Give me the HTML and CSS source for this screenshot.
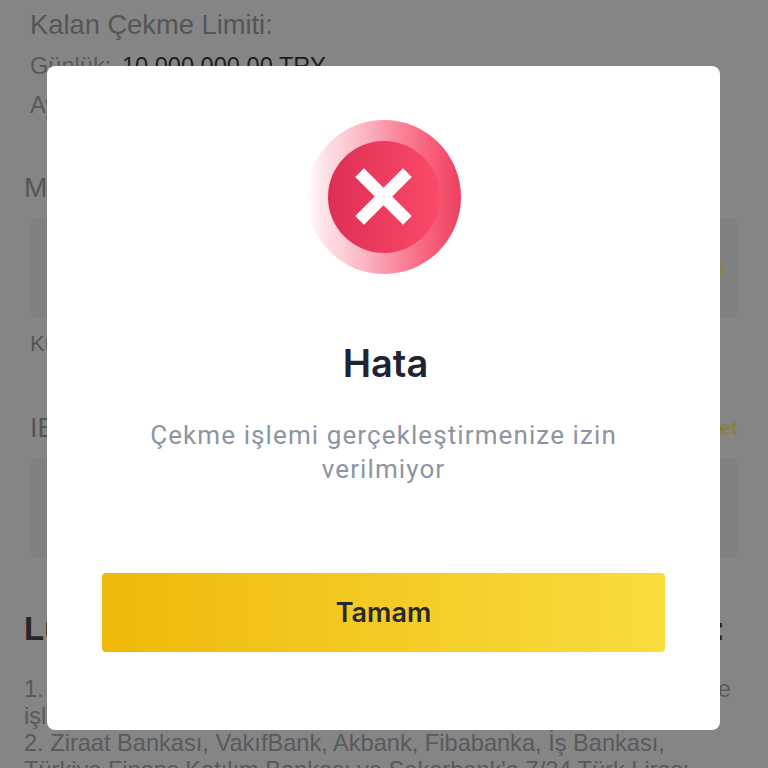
FILE: index.html
```html
<!DOCTYPE html>
<html lang="tr">
<head>
<meta charset="utf-8">
<title>Hata</title>
<link rel="stylesheet" href="styles.css">
</head>
<body>
<main class="page">
  <h2 class="limit-title">Kalan Çekme Limiti:</h2>
  <p class="limit-row"><span class="muted">Günlük:</span> <span class="value">10.000.000,00 TRY</span></p>
  <p class="limit-row second"><span class="muted">Aylık:</span></p>
  <h3 class="label amount">Miktar</h3>
  <div class="field"><span class="link">TRY'S</span></div>
  <p class="note">Kullanılabilir</p>
  <div class="label-row"><span class="iban">IBAN</span><span class="link iban-link">Yönet</span></div>
  <div class="field"></div>
  <h2 class="notice"><span>Lütfen aşağıdaki</span><span>dikkat ediniz:</span></h2>
  <p class="list"><span class="list-line first"><span>1. Çekme işlemi</span><span>yalnızca kendi hesabınıza yapılabilir ve</span></span>
  <span class="list-line">işlem iade edilir</span>
  <span class="list-line">2. Ziraat Bankası, VakıfBank, Akbank, Fibabanka, İş Bankası,</span>
  <span class="list-line">Türkiye Finans Katılım Bankası ve Şekerbank'a 7/24 Türk Lirası</span></p>
</main>

<div class="modal" role="dialog">
  <svg class="status-icon" width="154" height="154" viewBox="0 0 154 154" aria-hidden="true">
    <defs>
      <linearGradient id="ring" x1="0" y1="0" x2="1" y2="0">
        <stop offset="0" stop-color="#ff8599" stop-opacity="0"/>
        <stop offset="0.2" stop-color="#fba9b6" stop-opacity="0.5"/>
        <stop offset="0.5" stop-color="#fa9aab"/>
        <stop offset="0.78" stop-color="#f8637d"/>
        <stop offset="1" stop-color="#ee3f5e"/>
      </linearGradient>
      <linearGradient id="core" x1="0" y1="0" x2="1" y2="0">
        <stop offset="0" stop-color="#dd2e55"/>
        <stop offset="1" stop-color="#fb4a68"/>
      </linearGradient>
    </defs>
    <circle cx="77" cy="77" r="77" fill="url(#ring)"/>
    <circle cx="77" cy="77" r="56" fill="url(#core)"/>
    <path d="M52.6 52.6 L100.4 100.4 M100.4 52.6 L52.6 100.4" stroke="#fff" stroke-width="12.5" fill="none"/>
  </svg>
  <h1 class="modal-title">Hata</h1>
  <p class="modal-text">Çekme işlemi gerçekleştirmenize izin verilmiyor</p>
  <button class="modal-button" type="button">Tamam</button>
</div>
</body>
</html>
```
FILE: styles.css
```css
html, body {
  margin: 0;
  height: 768px;
  overflow: hidden;
  background: #858585;
}

.page {
  height: 768px;
  box-sizing: border-box;
  padding: 10px 30px 0 24px;
  overflow: hidden;
  font-family: "Liberation Sans", Arial, sans-serif;
  color: #555558;
}

.limit-title {
  margin: 0 0 0 6px;
  font-size: 27.3px;
  line-height: 30px;
  font-weight: 400;
}

.limit-row {
  margin: 13px 0 0 6px;
  font-size: 23.6px;
  line-height: 26px;
}

.limit-row.second {
  margin-top: 13px;
}

.muted {
  color: #59595c;
}

.value {
  color: #1d1d1f;
  margin-left: 4px;
}

.label {
  margin: 0;
  font-weight: 400;
}

.amount {
  margin-top: 55px;
  font-size: 28px;
  line-height: 30px;
}

.field {
  margin-left: 6px;
  height: 100px;
  background: #808080;
  border-radius: 6px;
  display: flex;
  align-items: center;
  justify-content: flex-end;
  padding-right: 14px;
}

.amount + .field {
  margin-top: 15px;
}

.link {
  color: #8a8040;
  font-size: 23px;
  font-weight: 700;
}

.note {
  margin: 14px 0 0 6px;
  font-size: 22px;
  line-height: 24px;
}

.label-row {
  margin: 57px 0 15px 6px;
  display: flex;
  justify-content: space-between;
  align-items: center;
  line-height: 30px;
}

.iban {
  font-size: 27px;
}

.iban-link {
  font-size: 21px;
  white-space: nowrap;
}

.notice {
  margin: 52px 13px 0 0;
  display: flex;
  justify-content: space-between;
  font-size: 33px;
  line-height: 38px;
  font-weight: 700;
  color: #262628;
  white-space: nowrap;
}

.list {
  margin: 28px 0 0;
  font-size: 23.6px;
  line-height: 27px;
  color: #59595e;
}

.list-line {
  display: block;
  white-space: nowrap;
}

.list-line.first {
  display: flex;
  justify-content: space-between;
  margin-right: 7px;
}

.modal {
  position: absolute;
  left: 47px;
  top: 66px;
  width: 673px;
  height: 664px;
  box-sizing: border-box;
  padding: 54px 55px 0;
  background: #fff;
  border-radius: 8px;
  display: flex;
  flex-direction: column;
  align-items: center;
  font-family: Inter, "Liberation Sans", sans-serif;
}

.status-icon {
  display: block;
  flex: none;
}

.modal-title {
  margin: 66px 0 0 4px;
  font-size: 38px;
  line-height: 46px;
  font-weight: 600;
  color: #1e2433;
}

.modal-text {
  margin: 32px 0 0;
  width: 500px;
  text-align: center;
  font-family: Roboto, Inter, sans-serif;
  font-size: 26px;
  line-height: 34px;
  letter-spacing: 1.1px;
  color: #8c95a2;
}

.modal-button {
  margin-top: 87px;
  width: 563px;
  height: 79px;
  flex: none;
  border: 0;
  border-radius: 4px;
  background: linear-gradient(90deg, #f0b90b, #f8dc3e);
  font-family: Inter, "Liberation Sans", sans-serif;
  font-size: 27px;
  font-weight: 600;
  color: #262a2e;
}
```
